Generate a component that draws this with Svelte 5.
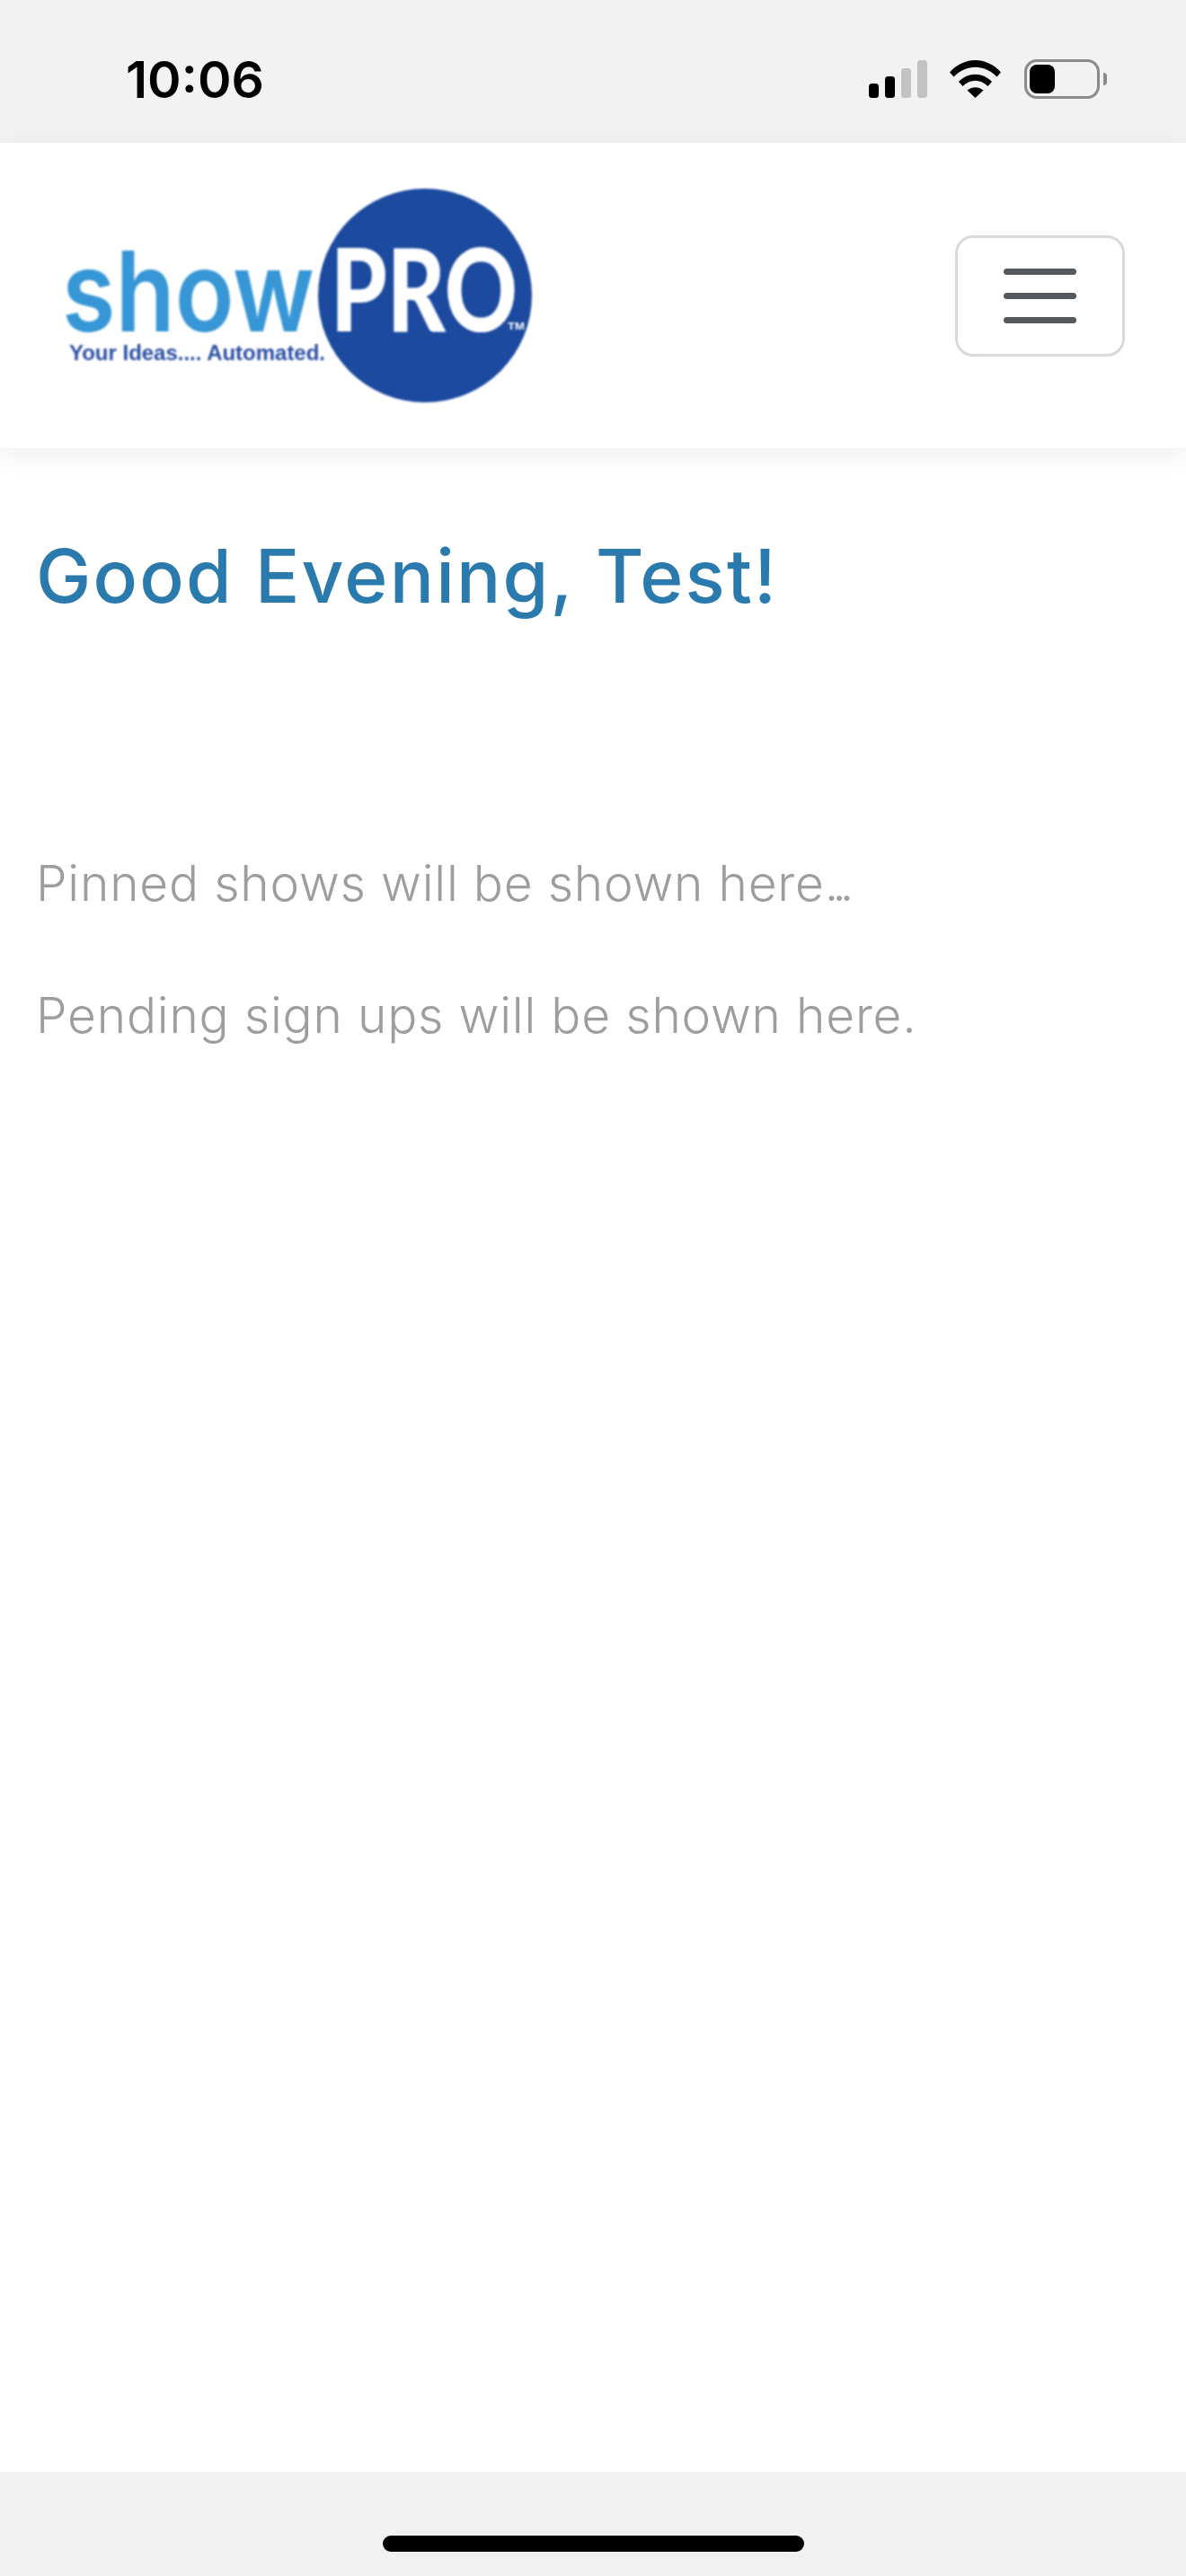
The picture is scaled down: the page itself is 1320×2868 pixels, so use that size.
<script lang="ts">
  // Home screen of the showPRO app inside an iOS frame.
  const greeting = "Good Evening, Test!";
  const notes = [
    { text: "Pinned shows will be shown here", dots: "..." },
    { text: "Pending sign ups will be shown here.", dots: "" },
  ];
</script>

<div class="screen">
  <div class="status-bar">
    <span class="time">10:06</span>
    <div class="status-icons">
      <svg class="signal" width="65" height="42" viewBox="0 0 65 42">
        <rect x="0" y="26" width="11" height="16" rx="3.5" fill="#000" />
        <rect x="18" y="18" width="11" height="24" rx="3.5" fill="#000" />
        <rect x="36" y="9" width="11" height="33" rx="3.5" fill="#c2c2c2" />
        <rect x="54" y="0" width="11" height="42" rx="3.5" fill="#c2c2c2" />
      </svg>
      <svg class="wifi" width="57" height="42" viewBox="0 0 57 42">
        <path d="M0 13.5 C16 -4.5 41 -4.5 57 13.5 L52.5 18.5 C38.5 4 18.5 4 4.5 18.5 Z" fill="#000" />
        <path d="M10 24 C20.5 13 36.5 13 47 24 L42.5 29 C33.5 20.5 23.5 20.5 14.5 29 Z" fill="#000" />
        <path d="M19.5 33.5 C25 29 32 29 37.5 33.5 L28.5 42 Z" fill="#000" />
      </svg>
      <div class="battery">
        <div class="battery-body"><div class="battery-level"></div></div>
        <div class="battery-nub"></div>
      </div>
    </div>
  </div>

  <header class="navbar">
    <svg class="logo" width="534" height="244" viewBox="0 0 534 244" role="img" aria-label="showPRO">
      <circle cx="405" cy="122" r="119" fill="#1c4a9f" />
      <text class="logo-show" x="1" y="162" textLength="281" lengthAdjust="spacingAndGlyphs">show</text>
      <text class="logo-pro" x="300" y="162" textLength="208" lengthAdjust="spacingAndGlyphs">PRO</text>
      <text class="logo-tm" x="497" y="160" textLength="19" lengthAdjust="spacingAndGlyphs">TM</text>
      <text class="logo-tag" x="9" y="194" textLength="285" lengthAdjust="spacingAndGlyphs">Your Ideas.... Automated.</text>
    </svg>
    <button class="toggler" aria-label="Menu">
      <span></span>
      <span></span>
      <span></span>
    </button>
  </header>

  <main class="content">
    <h1>{greeting}</h1>
    <div class="notes">
      {#each notes as note}
        <p>{note.text}<span class="dots">{note.dots}</span></p>
      {/each}
    </div>
  </main>

  <div class="home-bar">
    <div class="home-indicator"></div>
  </div>
</div>

<style>
  :global(body) {
    margin: 0;
    background: #fff;
  }

  .screen {
    display: flex;
    flex-direction: column;
    height: 2868px;
    overflow: hidden;
  }

  .status-bar {
    flex: none;
    height: 159px;
    box-sizing: border-box;
    background: #f2f2f2;
    display: flex;
    justify-content: space-between;
    align-items: flex-start;
    padding: 67px 88px 0 140px;
  }

  .time {
    font-family: "Inter", "Liberation Sans", sans-serif;
    font-size: 57px;
    font-weight: 600;
    line-height: 44px;
    color: #000;
  }

  .status-icons {
    display: flex;
    align-items: flex-start;
  }

  .signal {
    display: block;
    margin-right: 25px;
  }

  .wifi {
    display: block;
    margin-right: 26px;
  }

  .battery {
    display: flex;
    align-items: center;
    margin-top: -1px;
  }

  .battery-body {
    box-sizing: border-box;
    width: 84px;
    height: 44px;
    padding: 3px;
    border: 3px solid #8a8a8a;
    border-radius: 14px;
  }

  .battery-level {
    width: 28px;
    height: 32px;
    background: #000;
    border-radius: 8px;
  }

  .battery-nub {
    width: 4px;
    height: 14px;
    margin-left: 4px;
    background: #8a8a8a;
    border-radius: 0 4px 4px 0;
  }

  .navbar {
    flex: none;
    position: relative;
    height: 340px;
    box-sizing: border-box;
    background: #fff;
    box-shadow: 0 8px 30px rgba(0, 0, 0, 0.07);
    display: flex;
    justify-content: space-between;
    align-items: center;
    padding: 0 68px 0 68px;
  }

  .logo {
    display: block;
    filter: blur(0.9px);
  }

  .logo-show {
    font-family: "Inter", sans-serif;
    font-weight: 600;
    font-size: 124px;
    fill: #3797d6;
  }

  .logo-pro {
    font-family: "Lato", sans-serif;
    font-weight: 900;
    font-size: 127px;
    fill: #fff;
  }

  .logo-tm {
    font-family: "Liberation Sans", sans-serif;
    font-weight: 700;
    font-size: 11px;
    fill: #fff;
  }

  .logo-tag {
    font-family: "Liberation Sans", sans-serif;
    font-weight: 700;
    font-size: 24px;
    fill: #2b4da3;
  }

  .toggler {
    display: flex;
    flex-direction: column;
    align-items: center;
    justify-content: center;
    gap: 20px;
    box-sizing: border-box;
    width: 189px;
    height: 135px;
    margin-top: 1px;
    padding: 0;
    background: #fff;
    border: 3px solid #d9d9d9;
    border-radius: 20px;
  }

  .toggler span {
    display: block;
    width: 81px;
    height: 7px;
    background: #55585c;
    border-radius: 4px;
  }

  .content {
    flex: 1;
    padding: 0 40px;
    font-family: "Inter", "Liberation Sans", sans-serif;
  }

  h1 {
    margin: 93px 0 0;
    font-size: 82px;
    font-weight: 500;
    letter-spacing: 2.2px;
    line-height: 100px;
    color: #2a7aae;
  }

  .notes {
    margin-top: 258px;
    display: flex;
    flex-direction: column;
    gap: 81px;
  }

  p {
    margin: 0;
    font-size: 55px;
    font-weight: 300;
    letter-spacing: 0.8px;
    line-height: 66px;
    color: #9d9d9d;
  }

  .dots {
    letter-spacing: -7px;
  }

  .home-bar {
    flex: none;
    height: 116px;
    box-sizing: border-box;
    background: #f1f1f1;
    display: flex;
    justify-content: center;
    padding-top: 71px;
  }

  .home-indicator {
    width: 469px;
    height: 18px;
    background: #000;
    border-radius: 9px;
  }
</style>
